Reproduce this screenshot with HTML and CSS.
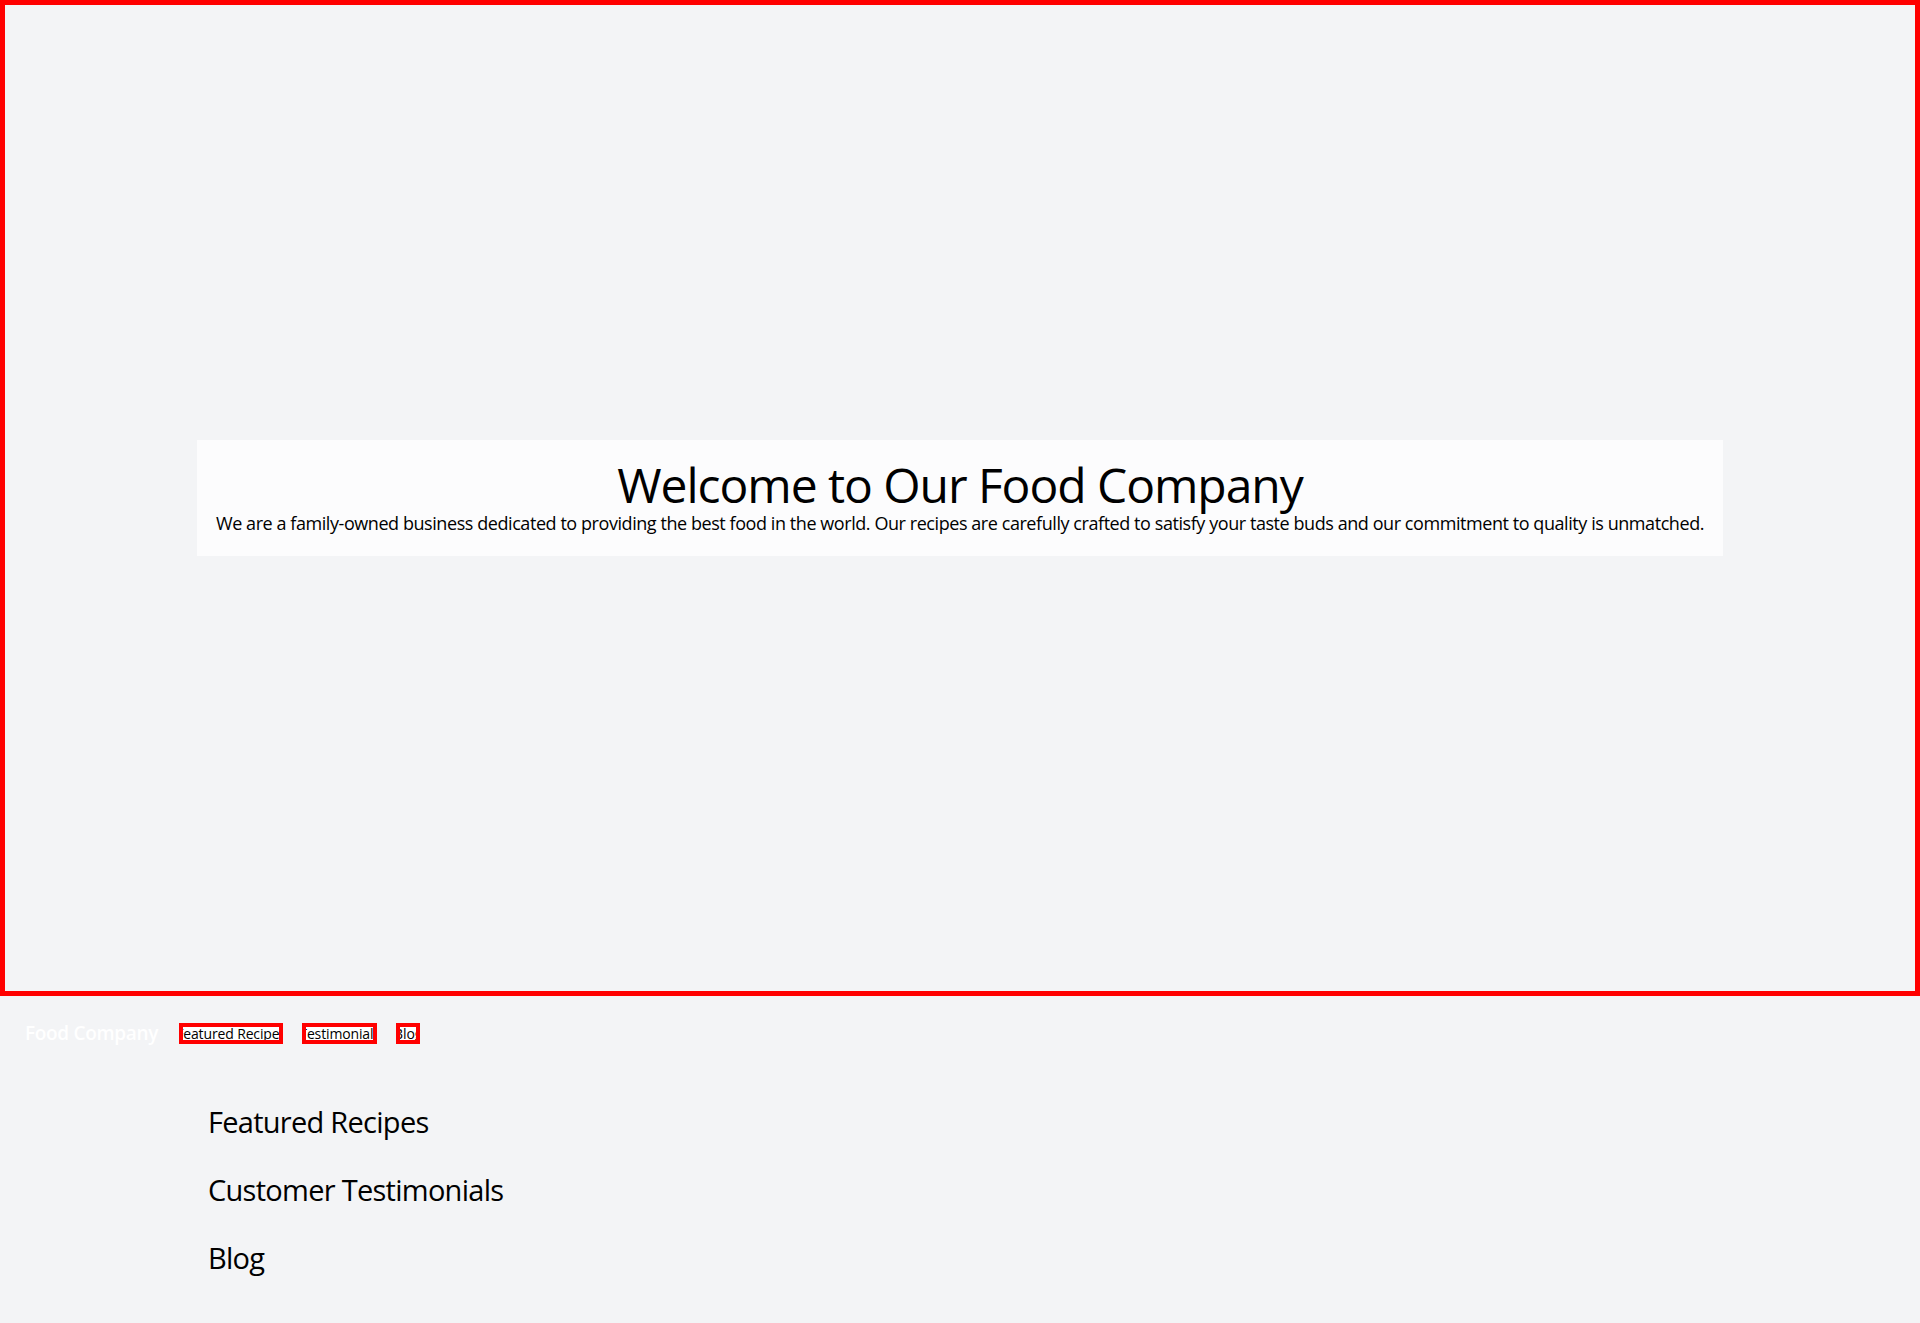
FILE: index.html
```html
<!DOCTYPE html>
<html lang="en">
<head>
<meta charset="utf-8">
<title>Food Company</title>
<link rel="stylesheet" href="styles.css">
</head>
<body>
<section class="hero">
  <div class="hero-card">
    <h1 class="hero-title">Welcome to Our Food Company</h1>
    <p class="hero-text">We are a family-owned business dedicated to providing the best food in the world. Our recipes are carefully crafted to satisfy your taste buds and our commitment to quality is unmatched.</p>
  </div>
</section>
<nav class="nav">
  <span class="brand">Food Company</span>
  <a class="nav-link nav-link--recipes" href="#recipes"><span>Featured Recipes</span></a>
  <a class="nav-link nav-link--testimonials" href="#testimonials"><span>Testimonials</span></a>
  <a class="nav-link nav-link--blog" href="#blog"><span>Blog</span></a>
</nav>
<main class="content">
  <h2 class="section-title" id="recipes">Featured Recipes</h2>
  <h2 class="section-title" id="testimonials">Customer Testimonials</h2>
  <h2 class="section-title" id="blog">Blog</h2>
</main>
</body>
</html>
```
FILE: styles.css
```css
html, body {
  margin: 0;
  padding: 0;
}
body {
  background: #f3f4f6;
  font-family: "Open Sans", "Noto Sans", "Liberation Sans", sans-serif;
  letter-spacing: -0.02em;
  color: #000;
}
.hero {
  box-sizing: border-box;
  height: 996px;
  border: 5px solid #ff0000;
  display: flex;
  align-items: center;
  justify-content: center;
}
.hero-card {
  box-sizing: border-box;
  width: 1526px;
  padding: 21px 16px 19px;
  background: rgba(255, 255, 255, 0.72);
  text-align: center;
}
.hero-title {
  margin: 0;
  font-size: 48px;
  line-height: 48px;
  font-weight: 400;
  letter-spacing: -0.022em;
}
.hero-text {
  margin: 0;
  font-size: 18px;
  line-height: 28px;
  letter-spacing: -0.024em;
  white-space: nowrap;
}
.nav {
  display: flex;
  align-items: center;
  padding: 23px 25px;
}
.brand {
  color: #ffffff;
  font-weight: 600;
  font-size: 19px;
  line-height: 28px;
  margin-right: 21px;
}
.nav-link {
  display: flex;
  justify-content: center;
  align-items: center;
  overflow: hidden;
  height: 13px;
  border: 4px solid #ff0000;
  background: #ffffff;
  color: #000;
  text-decoration: none;
  font-size: 14px;
  line-height: 13px;
  letter-spacing: -0.01em;
  white-space: nowrap;
  margin-right: 19px;
}
.nav-link--recipes { width: 96px; }
.nav-link--testimonials { width: 67px; }
.nav-link--blog { width: 16px; }
.content {
  padding: 34px 0 0 208px;
}
.section-title {
  margin: 0 0 32px;
  font-size: 29px;
  line-height: 36px;
  font-weight: 400;
  letter-spacing: -0.025em;
}
```
